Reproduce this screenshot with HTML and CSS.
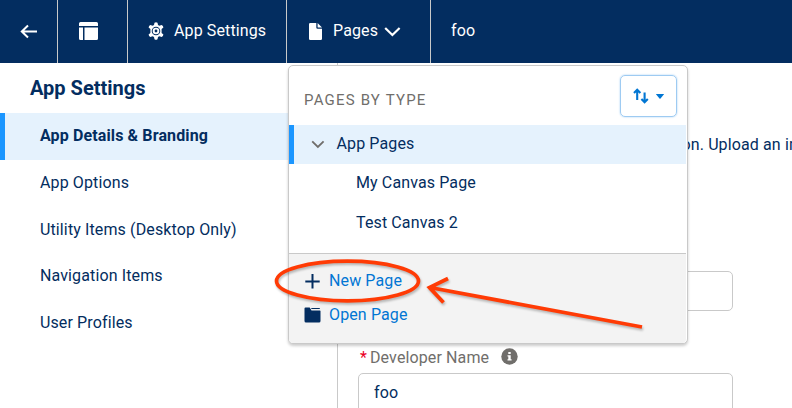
FILE: index.html
```html
<!DOCTYPE html>
<html lang="en">
<head>
<meta charset="utf-8">
<title>App Settings</title>
<link rel="stylesheet" href="styles.css">
</head>
<body>
<header class="topbar">
  <div class="cell back"><svg width="18" height="16" viewBox="0 0 18 16"><path d="M8 1.500 1.800 7.500 8 13.500M2.400 7.500H17" fill="none" stroke="#fff" stroke-width="2"/></svg></div>
  <div class="cell layout"><svg width="19" height="18" viewBox="0 0 19 18" fill="#fff"><path d="M1.500 0h16Q19 0 19 1.500V4H0V1.500Q0 0 1.500 0zM0 5.500h4V18H1.500Q0 18 0 16.500zM5.500 5.500H19v11q0 1.500-1.500 1.500h-12z"/></svg></div>
  <div class="cell settings"><svg width="16" height="18" viewBox="0 0 16 18"><path fill="#fff" fill-rule="evenodd" d="M6.500.8Q8-.2 9.500.8l.5 2.300 1.300.7 2.400-.8q1.500.7 1.700 2.400L13.600 7v4l1.800 1.600q-.2 1.700-1.700 2.400l-2.400-.8-1.300.7-.5 2.300q-1.500 1-3 0L6 14.900l-1.300-.7-2.400.8Q.8 14.300.6 12.600L2.400 11V7L.6 5.400Q.8 3.700 2.300 3l2.400.8L6 3.100zM8 4.700a4.300 4.300 0 1 0 0 8.600 4.300 4.300 0 0 0 0-8.600zM8 5.700a3.300 3.300 0 1 1 0 6.600 3.300 3.300 0 0 1 0-6.600zM8 7.600a1.400 1.400 0 1 0 0 2.800 1.400 1.400 0 0 0 0-2.800z"/></svg><span>App Settings</span></div>
  <div class="cell pages"><svg class="doc" width="13" height="17" viewBox="0 0 13 17"><path fill="#fff" d="M1.300 0h6v4.500q0 1.300 1.300 1.300H13v9.900q0 1.300-1.300 1.300H1.300Q0 17 0 15.700V1.300Q0 0 1.300 0zM8.600 0 13 4.600H9.200q-.6 0-.6-.6z"/></svg><span>Pages</span><svg class="chev" width="17" height="10" viewBox="0 0 17 10"><path d="m1.200 1 7.200 7 7.200-7" fill="none" stroke="#fff" stroke-width="2.200"/></svg></div>
  <div class="cell name"><span>foo</span></div>
</header>
<div class="body">
  <nav class="sidebar">
    <h1>App Settings</h1>
    <ul>
      <li class="active"><span class="bold">App Details &amp; Branding</span></li>
      <li><span>App Options</span></li>
      <li><span>Utility Items (Desktop Only)</span></li>
      <li><span>Navigation Items</span></li>
      <li><span>User Profiles</span></li>
    </ul>
  </nav>
  <main class="content">
    <p class="intro">on. Upload an image</p>
    <div class="input first"></div>
    <div class="label"><span class="req">*</span><span class="dev">Developer Name</span><svg width="17" height="17" viewBox="0 0 17 17"><circle cx="8.500" cy="8.500" r="8.200" fill="#706e6b"/><path fill="#fff" d="M7.300 4h2.400v2.100H7.300zM6.500 7.300h3.200v4h.9v1.300H6.500v-1.300h.8V8.600h-.8z"/></svg></div>
    <div class="input second"><span>foo</span></div>
  </main>
</div>
<section class="menu">
  <div class="menu-head">
    <span class="caps">PAGES BY TYPE</span>
    <div class="sort"><svg width="16" height="16" viewBox="0 0 16 16"><path d="M4.200 12V1.800M1 4.900l3.200-3.200 3.200 3.200M11.600 4.500v9.700M8.400 11.100l3.200 3.200 3.200-3.200" fill="none" stroke="#0176d3" stroke-width="2.100"/></svg><svg class="tri" width="8" height="5" viewBox="0 0 8 5"><path d="M.5 0h7q.5 0 .3.500L4.500 4.600q-.5.500-1 0L.2.500Q0 0 .5 0z" fill="#0176d3"/></svg></div>
  </div>
  <div class="group"><svg width="14" height="9" viewBox="0 0 14 9"><path d="m1.200 1.300 5.700 5.700 5.700-5.700" fill="none" stroke="#706e6b" stroke-width="1.800"/></svg><span>App Pages</span></div>
  <div class="page">My Canvas Page</div>
  <div class="page">Test Canvas 2</div>
  <div class="actions">
    <div class="action"><svg width="16" height="16" viewBox="0 0 16 16"><path d="M8.500 1v14.400M1.300 8.500h14.400" stroke="#032d60" stroke-width="2"/></svg><span>New Page</span></div>
    <div class="action open"><svg width="17" height="16" viewBox="0 0 17 16" fill="#032d60"><path d="M1.500.5h4.200L7.500 3.500h8.400q.6 0 .6.600V14q0 1.500-1.500 1.500H2Q.5 15.500.5 14V1.500Q.5.500 1.500.5zM7 1h8.200q.8 0 .8 1H7.600z"/></svg><span>Open Page</span></div>
  </div>
</section>
<svg class="annotation" width="792" height="408" viewBox="0 0 792 408" fill="none" stroke="#ff3b05">
  <ellipse cx="347.500" cy="281" rx="71" ry="19.800" stroke-width="3.700"/>
  <path d="M642 327 430 287.500M448 278.500l-18.500 9L443.500 302.500" stroke-width="3.800"/>
</svg>
</body>
</html>
```

FILE: styles.css
```css
* { box-sizing: border-box; }
body {
  margin: 0;
  width: 792px;
  height: 408px;
  overflow: hidden;
  position: relative;
  background: #fff;
  color: #032d60;
  font: 16px/20px Roboto, "Liberation Sans", sans-serif;
  letter-spacing: .12px;
}
svg { display: block; flex: none; }
.topbar { display: flex; height: 63px; background: #032d60; color: #fff; }
.cell { display: flex; align-items: center; border-right: 1px solid #c9c9c9; white-space: nowrap; }
.back { width: 58px; padding-left: 20px; }
.layout { width: 70px; padding-left: 21px; }
.layout svg { margin-top: -1px; }
.settings { width: 159px; padding-left: 20px; gap: 10px; }
.settings svg { margin-top: -1px; }
.pages { width: 144px; padding-left: 22px; }
.doc { margin-right: 11px; }
.chev { margin-left: 6px; }
.name { border: 0; padding-left: 20px; }
.topbar span { margin-top: -2px; }
.body { display: flex; height: 345px; }
.sidebar { width: 338px; border-right: 1px solid #c9c9c9; flex: none; }
h1 { margin: 0; height: 50px; padding: 13px 0 0 30px; font-size: 20px; line-height: 24px; font-weight: 700; letter-spacing: 0; }
ul { list-style: none; margin: 0; padding: 0; }
li { height: 46.700px; padding-left: 40px; display: flex; align-items: center; }
.active { background: #e5f2fd; padding-left: 35px; border-left: 5px solid #1b96ff; }
.bold { font-weight: 700; }
.content { flex: 1; padding-left: 20px; overflow: hidden; }
.intro { margin: 72px 0 116px 323.500px; white-space: nowrap; }
.input { width: 375px; height: 40px; border: 1px solid #c9c9c9; border-radius: 5px; padding: 9px 15px; }
.label { display: flex; align-items: center; height: 62px; padding: 31px 0 0 2px; color: #706e6b; }
.req { color: #ea001e; width: 10px; }
.dev { margin-right: 12px; }
.label svg { margin-top: -2px; }
.menu {
  position: absolute;
  left: 288px;
  top: 65px;
  width: 400px;
  height: 279px;
  border: 1px solid #c9c9c9;
  border-radius: 5px;
  padding-right: 1px;
  background: #fff;
  box-shadow: 0 2px 3px rgba(0, 0, 0, .2);
}
.menu-head { height: 59px; display: flex; justify-content: space-between; padding: 9px 9px 0 15px; }
.caps { color: #706e6b; font-size: 15px; letter-spacing: 1.200px; padding-top: 15px; }
.sort { width: 57px; height: 42px; display: flex; align-items: center; padding-left: 12px; border: 1px solid #9ecbf2; border-radius: 5px; box-shadow: 0 0 2px #9ecbf2; }
.tri { margin-left: 7px; }
.group { height: 39px; background: #e5f2fd; border-left: 5px solid #1b96ff; display: flex; align-items: center; gap: 12px; padding-left: 16.500px; }
.group span { margin-top: -2px; }
.page { height: 40px; padding: 9px 0 0 67px; }
.actions { height: 90px; margin-top: 9px; border-top: 1px solid #c9c9c9; background: #f3f3f3; border-radius: 0 0 4px 4px; padding: 17px 0 0 15px; }
.action { display: flex; align-items: center; gap: 9px; height: 20px; margin-bottom: 14px; color: #0176d3; }
.open { gap: 8px; }
.annotation { position: absolute; left: 0; top: 0; filter: drop-shadow(1px 2px 1px rgba(0, 0, 0, .25)); }
```
